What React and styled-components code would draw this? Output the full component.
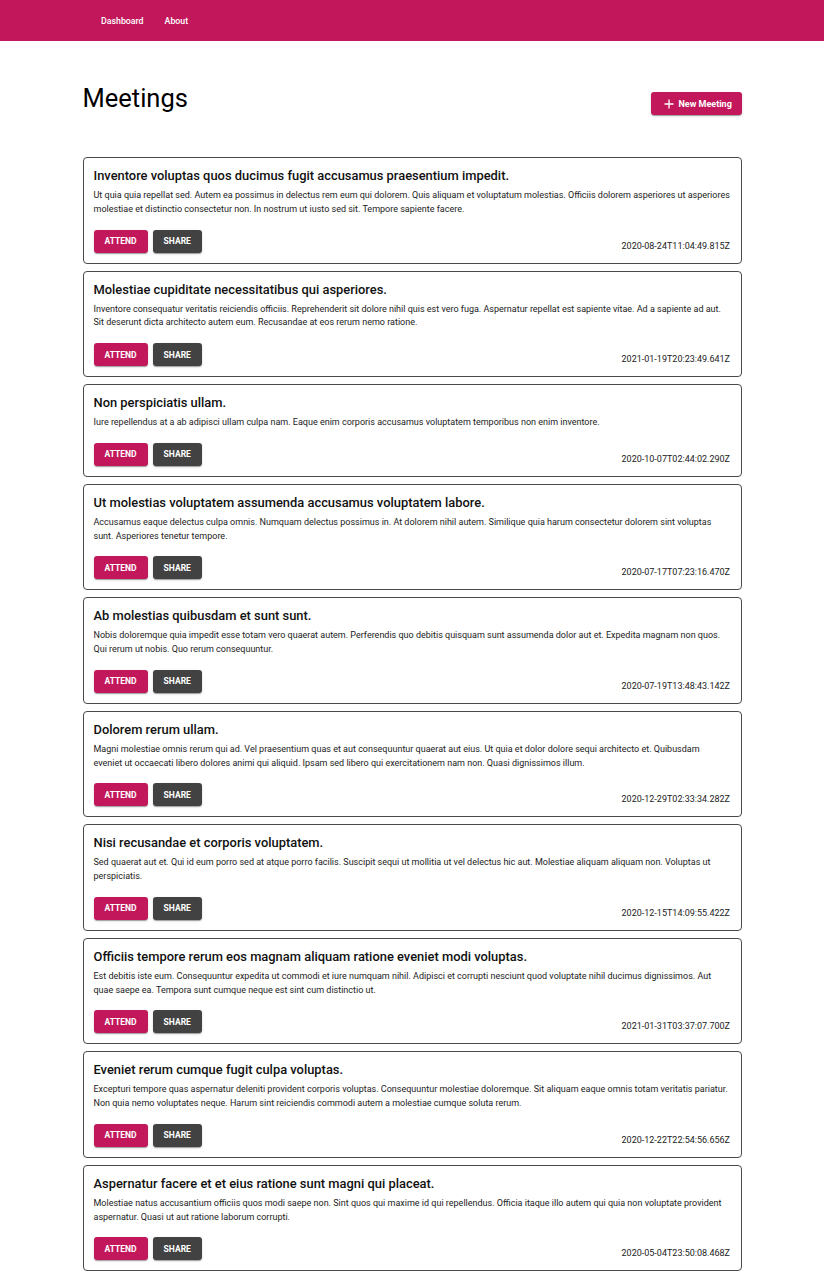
import React from "react";
import styled, { createGlobalStyle } from "styled-components";

const Global = createGlobalStyle`
  html, body { margin: 0; padding: 0; background: #fff; }
  body { font-family: Roboto, "Liberation Sans", Arial, sans-serif; color: #111; }
  * { box-sizing: border-box; }
`;

const NavBar = styled.header`
  height: 41px;
  background: #c2185b;
  display: flex;
  align-items: center;
  padding-left: 101px;
  padding-top: 1px;
  gap: 21px;
`;

const NavLink = styled.a`
  color: #fff;
  font-size: 8.8px;
  font-weight: 500;
  text-decoration: none;
  line-height: 1;
`;

const Main = styled.main`
  width: 659px;
  margin: 0 auto;
  padding-top: 42px;
`;

const HeaderRow = styled.div`
  display: flex;
  justify-content: space-between;
  align-items: center;
  height: 30px;
  margin-bottom: 44px;
`;

const Title = styled.h1`
  margin: 0;
  font-size: 25.5px;
  font-weight: 400;
  color: #000;
`;

const Button = styled.button`
  border: none;
  border-radius: 3px;
  height: 23px;
  padding: 0 11px;
  background: ${(p) => (p.$dark ? "#424242" : "#c2185b")};
  color: #fff;
  font-family: Roboto, "Liberation Sans", Arial, sans-serif;
  font-size: 8.5px;
  font-weight: 700;
  text-transform: ${(p) => (p.$upper ? "uppercase" : "none")};
  display: inline-flex;
  align-items: center;
  gap: 5px;
  box-shadow: 0 2px 1px -1px rgba(0,0,0,0.2), 0 1px 1px 0 rgba(0,0,0,0.14), 0 1px 3px 0 rgba(0,0,0,0.12);
  cursor: pointer;
`;

const NewButton = styled(Button)`
  width: 91px;
  margin-top: 11px;
  padding: 0 0 0 13px;
  font-size: 9px;
`;

const List = styled.div`
  display: flex;
  flex-direction: column;
  gap: 7px;
  padding-bottom: 16px;
`;

const Card = styled.article`
  border: 1px solid #4a4a4a;
  border-radius: 4px;
  padding: 10px 10.5px 10px 10px;
`;

const CardTitle = styled.h2`
  margin: 0 0 5px;
  font-size: 12.9px;
  font-weight: 500;
  line-height: 16px;
  color: #111;
`;

const CardText = styled.p`
  margin: 0;
  font-size: 9px;
  line-height: 13.75px;
  color: #222;
`;

const Footer = styled.div`
  display: flex;
  justify-content: space-between;
  align-items: flex-end;
  margin-top: 13px;
`;

const Actions = styled.div`
  display: flex;
  gap: 5px;
`;

const DateText = styled.span`
  font-size: 9px;
  color: #222;
  line-height: 12px;
  margin-bottom: 1px;
`;

const meetings = [
  ["Inventore voluptas quos ducimus fugit accusamus praesentium impedit.", "Ut quia quia repellat sed. Autem ea possimus in delectus rem eum qui dolorem. Quis aliquam et voluptatum molestias. Officiis dolorem asperiores ut asperiores molestiae et distinctio consectetur non. In nostrum ut iusto sed sit. Tempore sapiente facere.", "2020-08-24T11:04:49.815Z"],
  ["Molestiae cupiditate necessitatibus qui asperiores.", "Inventore consequatur veritatis reiciendis officiis. Reprehenderit sit dolore nihil quis est vero fuga. Aspernatur repellat est sapiente vitae. Ad a sapiente ad aut. Sit deserunt dicta architecto autem eum. Recusandae at eos rerum nemo ratione.", "2021-01-19T20:23:49.641Z"],
  ["Non perspiciatis ullam.", "Iure repellendus at a ab adipisci ullam culpa nam. Eaque enim corporis accusamus voluptatem temporibus non enim inventore.", "2020-10-07T02:44:02.290Z"],
  ["Ut molestias voluptatem assumenda accusamus voluptatem labore.", "Accusamus eaque delectus culpa omnis. Numquam delectus possimus in. At dolorem nihil autem. Similique quia harum consectetur dolorem sint voluptas sunt. Asperiores tenetur tempore.", "2020-07-17T07:23:16.470Z"],
  ["Ab molestias quibusdam et sunt sunt.", "Nobis doloremque quia impedit esse totam vero quaerat autem. Perferendis quo debitis quisquam sunt assumenda dolor aut et. Expedita magnam non quos. Qui rerum ut nobis. Quo rerum consequuntur.", "2020-07-19T13:48:43.142Z"],
  ["Dolorem rerum ullam.", "Magni molestiae omnis rerum qui ad. Vel praesentium quas et aut consequuntur quaerat aut eius. Ut quia et dolor dolore sequi architecto et. Quibusdam eveniet ut occaecati libero dolores animi qui aliquid. Ipsam sed libero qui exercitationem nam non. Quasi dignissimos illum.", "2020-12-29T02:33:34.282Z"],
  ["Nisi recusandae et corporis voluptatem.", "Sed quaerat aut et. Qui id eum porro sed at atque porro facilis. Suscipit sequi ut mollitia ut vel delectus hic aut. Molestiae aliquam aliquam non. Voluptas ut perspiciatis.", "2020-12-15T14:09:55.422Z"],
  ["Officiis tempore rerum eos magnam aliquam ratione eveniet modi voluptas.", "Est debitis iste eum. Consequuntur expedita ut commodi et iure numquam nihil. Adipisci et corrupti nesciunt quod voluptate nihil ducimus dignissimos. Aut quae saepe ea. Tempora sunt cumque neque est sint cum distinctio ut.", "2021-01-31T03:37:07.700Z"],
  ["Eveniet rerum cumque fugit culpa voluptas.", "Excepturi tempore quas aspernatur deleniti provident corporis voluptas. Consequuntur molestiae doloremque. Sit aliquam eaque omnis totam veritatis pariatur. Non quia nemo voluptates neque. Harum sint reiciendis commodi autem a molestiae cumque soluta rerum.", "2020-12-22T22:54:56.656Z"],
  ["Aspernatur facere et et eius ratione sunt magni qui placeat.", "Molestiae natus accusantium officiis quos modi saepe non. Sint quos qui maxime id qui repellendus. Officia itaque illo autem qui quia non voluptate provident aspernatur. Quasi ut aut ratione laborum corrupti.", "2020-05-04T23:50:08.468Z"],
];

const PlusIcon = () => (
  <svg width="10" height="10" viewBox="0 0 10 10" aria-hidden="true">
    <path d="M5 0.5v9M0.5 5h9" stroke="#fff" strokeWidth="1.3" fill="none" />
  </svg>
);

export default function App() {
  return (
    <>
      <Global />
      <NavBar>
        <NavLink href="#">Dashboard</NavLink>
        <NavLink href="#">About</NavLink>
      </NavBar>
      <Main>
        <HeaderRow>
          <Title>Meetings</Title>
          <NewButton>
            <PlusIcon />
            New Meeting
          </NewButton>
        </HeaderRow>
        <List>
          {meetings.map(([t, d, date]) => (
            <Card key={date}>
              <CardTitle>{t}</CardTitle>
              <CardText>{d}</CardText>
              <Footer>
                <Actions>
                  <Button $upper>Attend</Button>
                  <Button $upper $dark>Share</Button>
                </Actions>
                <DateText>{date}</DateText>
              </Footer>
            </Card>
          ))}
        </List>
      </Main>
    </>
  );
}
